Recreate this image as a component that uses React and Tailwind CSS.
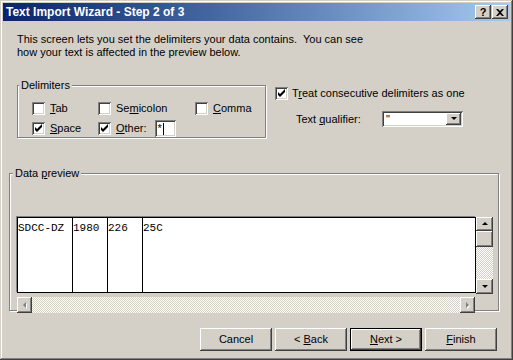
import React from 'react';

const RAISED =
  'bg-[#d4d0c8] shadow-[inset_-1px_-1px_#404040,inset_1px_1px_#ffffff,inset_-2px_-2px_#808080,inset_2px_2px_#d4d0c8]';
const SUNKEN =
  'bg-white shadow-[inset_1px_1px_#808080,inset_-1px_-1px_#ffffff,inset_2px_2px_#404040,inset_-2px_-2px_#d4d0c8]';
const TRACK =
  'bg-[image:repeating-conic-gradient(#ffffff_0_25%,#d4d0c8_0_50%)] bg-[length:2px_2px]';

const Checkbox = ({ checked }) => (
  <span className={`w-[13px] h-[13px] shrink-0 ${SUNKEN}`}>
    {checked && (
      <svg width="13" height="13" viewBox="0 0 13 13">
        <path d="M3 5 L3 8 L5 10 L10 5 L10 2 L5 7 Z" fill="#000" />
      </svg>
    )}
  </span>
);

const Arrow = ({ dir, disabled }) => {
  const shapes = {
    up: 'M1 5 L4 2 L7 5 Z',
    down: 'M1 2 L7 2 L4 5 Z',
    left: 'M5 1 L5 7 L2 4 Z',
    right: 'M2 1 L2 7 L5 4 Z',
  };
  return (
    <svg width="8" height="8" viewBox="0 0 8 8">
      {disabled && <path d={shapes[dir]} fill="#fff" transform="translate(1 1)" />}
      <path d={shapes[dir]} fill={disabled ? '#808080' : '#000'} />
    </svg>
  );
};

const Button = ({ children, primary }) => (
  <div
    className={`w-[72px] h-[23px] flex items-center justify-center ${RAISED} ${
      primary ? 'border border-black' : ''
    }`}
  >
    {children}
  </div>
);

export default function App() {
  return (
    <div className="w-[513px] h-[360px] bg-[#d4d0c8] p-[3px] flex flex-col font-['Liberation_Sans',Arial,sans-serif] text-[11px] leading-[13px] text-black shadow-[inset_-1px_-1px_#404040,inset_1px_1px_#d4d0c8,inset_-2px_-2px_#808080,inset_2px_2px_#ffffff]">
      {/* Title bar */}
      <div className="h-[18px] flex items-center bg-gradient-to-r from-[#0a246a] to-[#a6caf0] pl-[3px] pr-[2px]">
        <span className="flex-1 font-bold text-white text-[12px]">Text Import Wizard - Step 2 of 3</span>
        <div className="flex gap-[1px]">
          <div className={`w-[16px] h-[14px] flex items-center justify-center font-bold text-[11px] ${RAISED}`}>?</div>
          <div className={`w-[16px] h-[14px] flex items-center justify-center ${RAISED}`}>
            <svg width="8" height="7" viewBox="0 0 8 7">
              <path d="M0 0 L2 0 L4 2 L6 0 L8 0 L5 3.5 L8 7 L6 7 L4 5 L2 7 L0 7 L3 3.5 Z" fill="#000" />
            </svg>
          </div>
        </div>
      </div>

      <div className="flex-1 flex flex-col">
        <p className="mt-[12px] ml-[14px]">
          This screen lets you set the delimiters your data contains.&nbsp; You can see
          <br />
          how your text is affected in the preview below.
        </p>

        <div className="flex mt-[26px] ml-[14px]">
          {/* Delimiters group */}
          <div className="relative w-[249px] h-[53px] border border-[#808080] shadow-[1px_1px_0_#ffffff,inset_1px_1px_0_#ffffff] pt-[16px] pl-[14px] flex flex-col gap-[7px]">
            <span className="absolute -top-[7px] left-[1px] px-[2px] bg-[#d4d0c8]">Delimiters</span>
            <div className="flex items-center h-[13px]">
              <div className="w-[66px] flex items-center gap-[5px]">
                <Checkbox />
                <span><u>T</u>ab</span>
              </div>
              <div className="w-[97px] flex items-center gap-[5px]">
                <Checkbox />
                <span>Se<u>m</u>icolon</span>
              </div>
              <div className="flex items-center gap-[5px]">
                <Checkbox />
                <span><u>C</u>omma</span>
              </div>
            </div>
            <div className="flex items-center h-[13px]">
              <div className="w-[66px] flex items-center gap-[5px]">
                <Checkbox checked />
                <span><u>S</u>pace</span>
              </div>
              <div className="flex items-center gap-[5px]">
                <Checkbox checked />
                <span><u>O</u>ther:</span>
                <div className={`ml-[3px] w-[21px] h-[17px] flex items-center pl-[3px] ${SUNKEN}`}>
                  <span>*</span>
                  <span className="w-[1px] h-[12px] bg-black ml-[1px]" />
                </div>
              </div>
            </div>
          </div>

          {/* Right column */}
          <div className="ml-[9px] mt-[2px] flex flex-col">
            <div className="flex items-center gap-[4px] h-[13px]">
              <Checkbox checked />
              <span>T<u>r</u>eat consecutive delimiters as one</span>
            </div>
            <div className="flex items-center mt-[11px] pl-[21px]">
              <span className="w-[86px]">Text <u>q</u>ualifier:</span>
              <div className={`w-[81px] h-[16px] flex items-center p-[2px] ${SUNKEN}`}>
                <span className="flex-1 pl-[2px] leading-[12px]">"</span>
                <div className={`w-[15px] h-[12px] flex items-center justify-center ${RAISED}`}>
                  <Arrow dir="down" />
                </div>
              </div>
            </div>
          </div>
        </div>

        {/* Data preview group */}
        <div className="relative mt-[35px] ml-[6px] w-[490px] h-[138px] border border-[#808080] shadow-[1px_1px_0_#ffffff,inset_1px_1px_0_#ffffff]">
          <span className="absolute -top-[7px] left-[3px] px-[2px] bg-[#d4d0c8]">
            Data <u>p</u>review
          </span>
          <div className="mt-[43px] ml-[7px] flex flex-col">
            <div className="flex">
              <div className="w-[459px] h-[76px] bg-white border border-black shadow-[-1px_-1px_0_#808080] flex font-['Liberation_Mono',monospace] text-[11px] leading-[13px] pt-[4px]">
                <div className="w-[55px] border-r border-black -mt-[4px] pt-[4px]">SDCC-DZ</div>
                <div className="w-[35px] border-r border-black -mt-[4px] pt-[4px]">1980</div>
                <div className="w-[35px] border-r border-black -mt-[4px] pt-[4px]">226</div>
                <div className="flex-1">25C</div>
              </div>
              <div className="w-[17px] h-[77px] flex flex-col">
                <div className={`h-[14px] flex items-center justify-center ${RAISED}`}>
                  <Arrow dir="up" />
                </div>
                <div className={`h-[16px] ${RAISED}`} />
                <div className={`flex-1 ${TRACK}`} />
                <div className={`h-[15px] flex items-center justify-center ${RAISED}`}>
                  <Arrow dir="down" />
                </div>
              </div>
            </div>
            <div className={`mt-[3px] w-[458px] h-[16px] flex ${TRACK}`}>
              <div className={`w-[15px] h-[16px] flex items-center justify-center ${RAISED}`}>
                <Arrow dir="left" disabled />
              </div>
              <div className="flex-1" />
              <div className={`w-[15px] h-[16px] flex items-center justify-center ${RAISED}`}>
                <Arrow dir="right" disabled />
              </div>
            </div>
          </div>
        </div>

        {/* Buttons */}
        <div className="mt-[17px] mr-[13px] flex justify-end gap-[3px]">
          <Button>Cancel</Button>
          <Button>
            &lt; <u className="ml-[3px]">B</u>ack
          </Button>
          <Button primary>
            <u>N</u>ext &gt;
          </Button>
          <Button>
            <u>F</u>inish
          </Button>
        </div>
      </div>
    </div>
  );
}
